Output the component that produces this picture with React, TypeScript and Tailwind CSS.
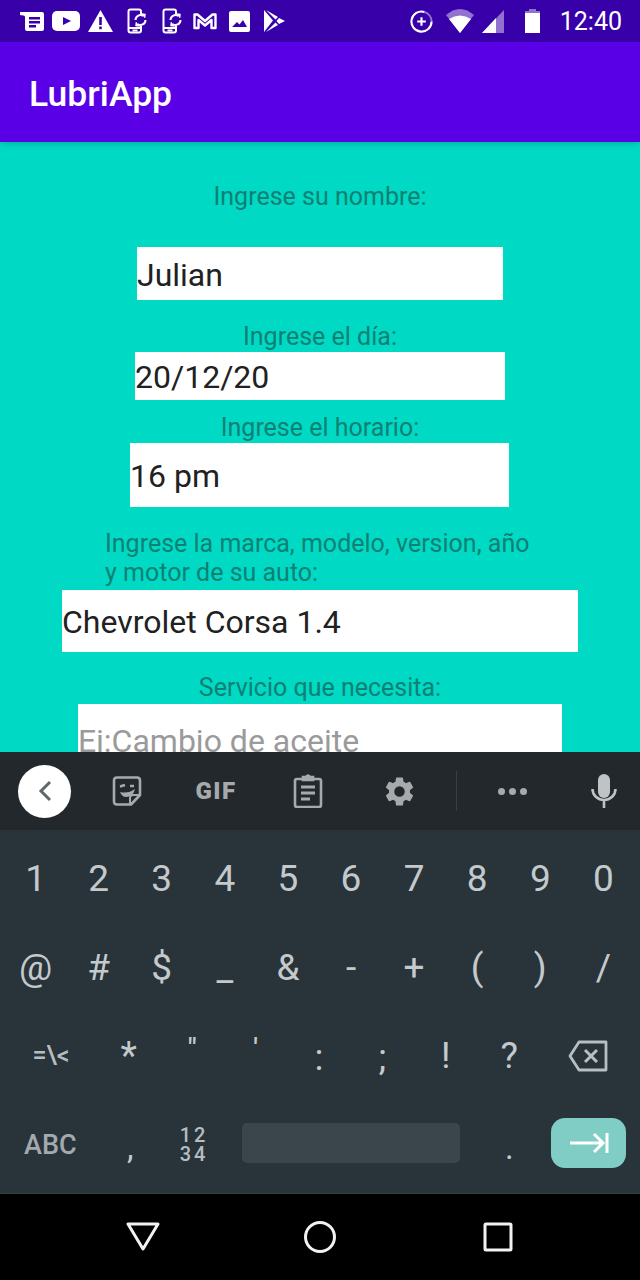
import React from "react";

const W = "#ffffff";
const BAR = "#3700a8";

function PhoneSync() {
  return (
    <svg width="20" height="26" viewBox="0 0 20 26" fill="none" stroke={W} strokeWidth="2">
      <path d="M14 6V3.500q0-2-2-2H3.500q-2 0-2 2v19q0 2 2 2H12q2 0 2-2V18" />
      <path d="M1 20h13" />
      <path d="M5.500 22.500h5" />
      <path d="M8.500 12a5 5 0 0 1 8-4" />
      <path d="M18.500 12a5 5 0 0 1-8 4" />
      <path d="M14.500 5.500l4 .500-.500 4z" fill={W} strokeWidth="0.500" />
      <path d="M12.500 18.500l-4-.500.500-4z" fill={W} strokeWidth="0.500" />
    </svg>
  );
}

function StatusIcons() {
  return (
    <div className="flex items-center h-full">
      <svg width="24" height="21" viewBox="0 0 24 21" className="ml-[20px]" fill={W}>
        <path d="M0 1h22q2 0 2 2v15q0 2-2 2H7q-2 0-2-2V6Q5 4 3 4.500L0 4z" />
        <path d="M9 6h11v2.500H9zM9 10h11v2.500H9zM9 14h7v2.500H9z" fill={BAR} />
      </svg>
      <svg width="28" height="20" viewBox="0 0 28 20" className="ml-[8px]" fill={W}>
        <rect x="0" y="0" width="28" height="20" rx="5" />
        <path d="M11 6l8 4-8 4z" fill={BAR} />
      </svg>
      <svg width="25" height="22" viewBox="0 0 25 22" className="ml-[8px]" fill={W}>
        <path d="M12.500 0L25 22H0z" />
        <path d="M11.200 7h2.600v8h-2.600zM11.200 16.500h2.600v2.700h-2.600z" fill={BAR} />
      </svg>
      <div className="ml-[14px] flex">
        <PhoneSync />
      </div>
      <div className="ml-[15px] flex">
        <PhoneSync />
      </div>
      <svg width="24" height="18" viewBox="0 0 24 18" className="ml-[11px]" fill="none" stroke={W} strokeWidth="2.400" strokeLinejoin="round">
        <path d="M1.500 16V2.500h3L12 9l7.500-6.500h3V16h-4V8L12 13.500 5.500 8v8z" />
      </svg>
      <svg width="21" height="21" viewBox="0 0 21 21" className="ml-[12px]" fill={W}>
        <rect width="21" height="21" rx="2" />
        <path d="M3 16l5-5 2.500 2.500L14 9l4 7z" fill={BAR} />
      </svg>
      <svg width="21" height="22" viewBox="0 0 21 22" className="ml-[14px]" fill={W}>
        <path d="M0 0l9 10.500L0 22z" />
        <path d="M2 0l9.500 9.500L14 7z" />
        <path d="M2 22l9.500-9.500L14 15z" />
        <path d="M15 8l6 3-6 3-2.500-3z" />
      </svg>
    </div>
  );
}

function SystemIcons() {
  return (
    <div className="flex items-center h-full">
      <svg width="23" height="23" viewBox="0 0 24 24" fill="none" stroke={W} strokeWidth="2.200">
        <path d="M22.500 12A10.500 10.500 0 1 1 15 2" />
        <path d="M15 2a10.500 10.500 0 0 1 7.500 10" opacity="0.450" />
        <path d="M7.500 12h9M12 7.500v9" />
      </svg>
      <svg width="28" height="24" viewBox="0 0 28 24" className="ml-[13px]">
        <path d="M0 6Q14-6 28 6L14 24z" fill={W} opacity="0.450" />
        <path d="M3 10Q14 3 25 10L14 24z" fill={W} />
      </svg>
      <svg width="22" height="23" viewBox="0 0 22 23" className="ml-[8px]">
        <path d="M22 0v23H0z" fill={W} opacity="0.450" />
        <path d="M14 8v15H0z" fill={W} />
      </svg>
      <svg width="15" height="24" viewBox="0 0 15 24" className="ml-[21px]">
        <path d="M4 0h7v2h4v4H0V2h4z" fill={W} opacity="0.450" />
        <rect x="0" y="4" width="15" height="20" fill={W} />
      </svg>
      <span className="ml-[20px] text-[25px] leading-none text-white font-['Roboto',sans-serif]">12:40</span>
    </div>
  );
}

function Field({
  label,
  value,
  boxClass,
  labelClass,
  placeholder,
}: {
  label: React.ReactNode;
  value: string;
  boxClass: string;
  labelClass: string;
  placeholder?: boolean;
}) {
  return (
    <>
      <div className={"shrink-0 text-[25px] leading-[29px] whitespace-nowrap text-[#0f8074] " + labelClass}>{label}</div>
      <div
        className={
          "bg-white flex items-center text-[32px] pt-[2px] whitespace-nowrap overflow-hidden shrink-0 " +
          (placeholder ? "text-[#9a9a9a] " : "text-[#212121] ") +
          boxClass
        }
      >
        {value}
      </div>
    </>
  );
}

const ROW2 = ["@", "#", "$", "_", "&", "-", "+", "(", ")", "/"];
const ROW1 = ["1", "2", "3", "4", "5", "6", "7", "8", "9", "0"];

function KeyRow({ keys, h }: { keys: string[]; h: string }) {
  return (
    <div className={"flex pl-[4px] pr-[5px] pt-[2px] text-[#c4c9cc] text-[37px] " + h}>
      {keys.map((k) => (
        <div key={k} className="flex-1 flex items-center justify-center">
          {k}
        </div>
      ))}
    </div>
  );
}

export default function App() {
  return (
    <div className="w-[640px] h-[1280px] flex flex-col overflow-hidden font-['Roboto',sans-serif]">
      <div className="h-[42px] shrink-0 bg-[#3700a8] flex justify-between pr-[18px]">
        <StatusIcons />
        <SystemIcons />
      </div>
      <div className="h-[100px] shrink-0 bg-[#5900e6] flex items-center pl-[29px] pt-[6px] text-white text-[35.500px] font-medium shadow-md z-10">
        LubriApp
      </div>
      <div className="h-[610px] shrink-0 bg-[#00d9c4] flex flex-col items-center overflow-hidden pt-[40px]">
        <Field label="Ingrese su nombre:" value="Julian" labelClass="h-[65px]" boxClass="w-[366px] h-[53px]" />
        <Field label="Ingrese el día:" value="20/12/20" labelClass="mt-[22px] h-[30px]" boxClass="w-[370px] h-[48px]" />
        <Field label="Ingrese el horario:" value="16 pm" labelClass="mt-[13px] h-[30px]" boxClass="w-[379px] h-[64px] mr-[1px]" />
        <Field
          label={
            <>
              Ingrese la marca, modelo, version, año
              <br />y motor de su auto:
            </>
          }
          value="Chevrolet Corsa 1.4"
          labelClass="mt-[22px] h-[61px] w-[430px]"
          boxClass="w-[516px] h-[62px]"
        />
        <Field label="Servicio que necesita:" value="Ej:Cambio de aceite" labelClass="mt-[21px] h-[31px]" boxClass="w-[484px] h-[72px]" placeholder />
      </div>
      <div className="h-[78px] shrink-0 bg-[#23282c] flex items-center text-[#a7aaac]">
        <div className="ml-[18px] w-[53px] h-[53px] rounded-full bg-white flex items-center justify-center">
          <svg width="16" height="22" viewBox="0 0 16 22" fill="none" stroke="#62676a" strokeWidth="3">
            <path d="M13 2L4 11l9 9" />
          </svg>
        </div>
        <svg width="30" height="30" viewBox="0 0 30 30" className="ml-[41px] shrink-0" fill="none" stroke="currentColor" strokeWidth="2.600" strokeLinejoin="round">
          <path d="M5 1.500h20q3 0 3 3V19l-9 9.500H5q-3 0-3-3v-21q0-3 3-3z" />
          <path d="M18 28v-6q0-3 3-3h7" strokeWidth="2" />
          <path d="M8 10.500l5-1.500M18 10h4" strokeWidth="2.400" />
          <path d="M8 16q8 2 15-3-2 8-9 8-4 0-6-5z" fill="currentColor" stroke="none" />
        </svg>
        <span className="ml-[52px] w-[44px] shrink-0 text-center text-[24px] font-black tracking-[1.500px]">GIF</span>
        <svg width="30" height="34" viewBox="0 0 30 34" className="ml-[55px] shrink-0" fill="none" stroke="currentColor" strokeWidth="2.600">
          <rect x="2" y="5" width="26" height="28" rx="2" />
          <path d="M10 6V3h3q2-3 4 0h3v3z" fill="currentColor" />
          <path d="M8 13h14M8 19h14M8 25h9" strokeWidth="2.800" />
        </svg>
        <svg width="35" height="35" viewBox="0 0 24 24" className="ml-[59px] shrink-0" fill="currentColor">
          <path d="M19.140 12.940c.040-.300.060-.610.060-.940 0-.320-.020-.640-.070-.940l2.030-1.580a.490.490 0 0 0 .120-.610l-1.920-3.320a.490.490 0 0 0-.590-.220l-2.390.960c-.500-.380-1.030-.700-1.620-.940l-.360-2.540a.480.480 0 0 0-.480-.410h-3.840a.470.470 0 0 0-.470.410l-.360 2.540c-.590.240-1.130.570-1.620.940l-2.390-.960a.480.480 0 0 0-.590.220L2.740 8.870a.480.480 0 0 0 .120.610l2.030 1.580c-.050.300-.090.630-.090.940s.020.640.070.940l-2.030 1.580a.490.490 0 0 0-.120.610l1.920 3.320c.120.220.370.290.590.220l2.390-.960c.500.380 1.030.700 1.620.940l.360 2.540c.050.240.240.410.480.410h3.840c.240 0 .440-.170.470-.410l.360-2.540c.590-.240 1.130-.560 1.620-.940l2.390.960c.220.080.470 0 .590-.220l1.920-3.320a.470.470 0 0 0-.120-.610zM12 15.600A3.600 3.600 0 1 1 12 8.400a3.600 3.600 0 0 1 0 7.200z" />
        </svg>
        <div className="ml-[39px] w-px h-[40px] shrink-0 bg-[#3a3f43]" />
        <div className="ml-[41px] flex gap-[4px] shrink-0">
          <div className="w-[7px] h-[7px] rounded-full bg-[#a7aaac]" />
          <div className="w-[7px] h-[7px] rounded-full bg-[#a7aaac]" />
          <div className="w-[7px] h-[7px] rounded-full bg-[#a7aaac]" />
        </div>
        <svg width="26" height="36" viewBox="0 0 26 36" className="ml-[64px] shrink-0 text-[#c0c3c5]" fill="none" stroke="currentColor" strokeWidth="2.600">
          <rect x="7" y="1" width="12" height="24" rx="6" fill="currentColor" stroke="none" />
          <path d="M1.500 16a11.500 11 0 0 0 23 0M13 27v8" />
        </svg>
      </div>
      <div className="h-[364px] shrink-0 bg-[#28333a] flex flex-col border-b border-[#363d43]">
        <KeyRow keys={ROW1} h="h-[96px]" />
        <KeyRow keys={ROW2} h="h-[84px] pb-[2px]" />
        <div className="h-[88px] pl-[5px] pr-[5px] pt-[4px] flex text-[#c4c9cc]">
          <div className="w-[92px] flex items-center justify-center text-[25px] font-medium text-[#b7bcbf]">=\&lt;</div>
          <div className="flex-1 flex items-center justify-center text-[38px]">*</div>
          <div className="flex-1 flex items-center justify-center text-[28px] font-medium pb-[14px]">"</div>
          <div className="flex-1 flex items-center justify-center text-[28px] font-medium pb-[14px]">'</div>
          <div className="flex-1 flex items-center justify-center text-[37px] pt-[4px]">:</div>
          <div className="flex-1 flex items-center justify-center text-[37px] pt-[4px]">;</div>
          <div className="flex-1 flex items-center justify-center text-[37px]">!</div>
          <div className="flex-1 flex items-center justify-center text-[37px]">?</div>
          <div className="w-[94px] flex items-center justify-center">
            <svg width="40" height="32" viewBox="0 0 40 32" fill="none" stroke="#b9bec1" strokeWidth="2.800" strokeLinejoin="round">
              <path d="M11 2h27v28H11L2 16z" />
              <path d="M17 10l12 12M29 10L17 22" strokeWidth="3" />
            </svg>
          </div>
        </div>
        <div className="flex-1 flex items-center pb-[5px]">
          <span className="ml-[24px] w-[52px] pt-[4px] text-[27px] font-medium text-[#a3aaae]">ABC</span>
          <span className="ml-[51px] text-[33px] text-[#c4c9cc] w-[10px] pt-[10px]">,</span>
          <div className="ml-[41px] w-[32px] pt-[3px] flex flex-col items-center text-[20px] leading-[19px] font-medium tracking-[3px] text-[#b7bcbf]">
            <span>12</span>
            <span>34</span>
          </div>
          <div className="ml-[32px] w-[218px] h-[40px] rounded-[5px] bg-[#3b454c]" />
          <span className="ml-[45px] text-[33px] text-[#c4c9cc] w-[10px] pt-[10px]">.</span>
          <div className="ml-[36px] w-[75px] h-[50px] rounded-[14px] bg-[#7fcdc5] flex items-center justify-center">
            <svg width="40" height="24" viewBox="0 0 40 24" fill="none" stroke="#ffffff" strokeWidth="3">
              <path d="M1 12h33M25 3l9 9-9 9M38 2v20" />
            </svg>
          </div>
        </div>
      </div>
      <div className="flex-1 bg-black flex items-center pl-[126px]">
        <svg width="34" height="32" viewBox="0 0 34 32" fill="none" stroke="#f2f2f2" strokeWidth="3" strokeLinejoin="round">
          <path d="M2 3h30L17 28z" />
        </svg>
        <svg width="34" height="34" viewBox="0 0 34 34" className="ml-[143px]" fill="none" stroke="#f2f2f2" strokeWidth="3">
          <circle cx="17" cy="17" r="14.500" />
        </svg>
        <svg width="30" height="30" viewBox="0 0 30 30" className="ml-[146px]" fill="none" stroke="#f2f2f2" strokeWidth="3">
          <rect x="2" y="2" width="26" height="26" rx="1" />
        </svg>
      </div>
    </div>
  );
}
